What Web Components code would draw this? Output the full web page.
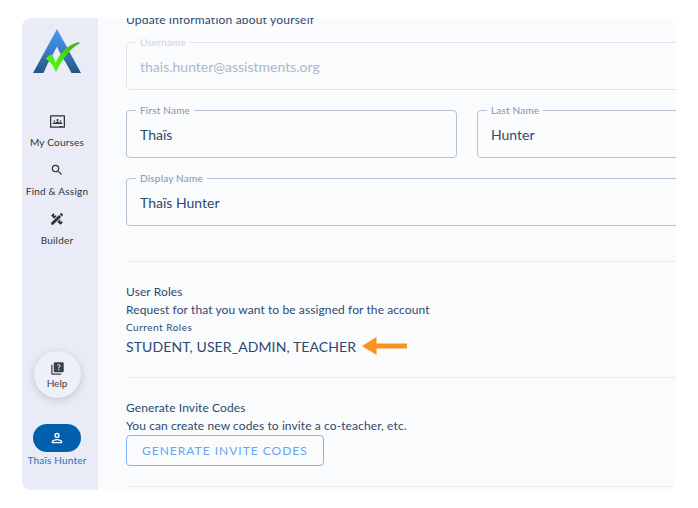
<!DOCTYPE html>
<html lang="en">
<head>
<meta charset="utf-8">
<title>Account</title>
<style>
html{background:#fff}
body{margin:0;padding:18px 22px;box-sizing:border-box;height:100vh;font-family:Lato,"Open Sans",sans-serif;color:#2c4a6e}
</style>
</head>
<body>
<account-page></account-page>
<script>
const define = (name, html, setup) => customElements.define(name, class extends HTMLElement {
  connectedCallback() {
    if (this.shadowRoot) return;
    const t = document.createElement('template');
    t.innerHTML = html;
    this.attachShadow({ mode: 'open' }).append(t.content.cloneNode(true));
    if (setup) setup(this, this.shadowRoot);
  }
});

define('brand-logo', `
<style>:host{display:block;width:48px;height:46px}svg{display:block}</style>
<svg width="48" height="46" viewBox="0 0 48 46" role="img" aria-label="ASSISTments">
<defs>
<linearGradient id="b" x1="0" y1="0" x2="0" y2="1"><stop offset="0" stop-color="#4a9af0"/><stop offset=".45" stop-color="#3b80cb"/><stop offset="1" stop-color="#25547f"/></linearGradient>
<linearGradient id="g" x1="0" y1="1" x2="1" y2="0"><stop offset="0" stop-color="#55fb12"/><stop offset=".5" stop-color="#4be30f"/><stop offset="1" stop-color="#3aa51c"/></linearGradient>
</defs>
<path fill="url(#b)" d="M24 0 48 44H38.500L33 34L29 28L24 17.500L19 27L15 34L10.500 44H0Z"/>
<path fill="url(#g)" d="M12.500 29.500 18.500 25Q21.500 29 22.500 34Q30 17 46 13L46.500 14.500Q34 21 23 43Q18.500 33 12.500 29.500Z"/>
</svg>`);

define('nav-item', `
<style>
:host{display:block}
a{display:flex;flex-direction:column;align-items:center;gap:6px;color:#2f333b;text-decoration:none;font-size:10px;line-height:14px;letter-spacing:.2px;white-space:nowrap}
.icon{display:grid;place-items:center;height:16px}
::slotted(svg){display:block;fill:currentColor}
</style>
<a href="#"><span class="icon"><slot name="icon"></slot></span><slot></slot></a>`);

define('help-button', `
<style>
:host{display:block}
button{display:flex;flex-direction:column;align-items:center;justify-content:center;gap:1px;width:47px;height:47px;padding:0;border:0;border-radius:50%;background:#edf0f8;box-shadow:0 2px 8px #0000002b;color:#3b3f48;font:10px/12px Lato,sans-serif}
svg{display:block;fill:currentColor}
</style>
<button type="button"><svg width="15" height="15" viewBox="0 0 24 24"><path d="M4 6H2v14c0 1.100.9 2 2 2h14v-2H4V6zm16-4H8c-1.100 0-2 .9-2 2v12c0 1.100.9 2 2 2h12c1.100 0 2-.9 2-2V4c0-1.100-.9-2-2-2zm-5.990 13c-.59 0-1.050-.47-1.050-1.050 0-.59.47-1.040 1.050-1.040.59 0 1.040.45 1.040 1.040-.01.58-.45 1.050-1.040 1.050zm2.500-6.170c-.63.93-1.230 1.210-1.560 1.810-.13.24-.18.400-.18 1.180h-1.520c0-.41-.06-1.080.26-1.650.41-.73 1.180-1.160 1.630-1.800.48-.68.21-1.940-1.140-1.940-.88 0-1.320.67-1.500 1.230l-1.370-.57C11.510 5.960 12.520 5 13.990 5c1.230 0 2.080.56 2.510 1.260.37.600.58 1.730.01 2.570z"/></svg>Help</button>`);

define('user-badge', `
<style>
:host{display:block}
a{display:flex;flex-direction:column;align-items:center;color:#2c6fb5;text-decoration:none;font-size:10px;line-height:16px;letter-spacing:.2px;white-space:nowrap}
span{display:grid;place-items:center;width:48px;height:28px;border-radius:14px;background:#0060ae}
svg{fill:#fff}
</style>
<a href="#"><span><svg width="14" height="14" viewBox="0 0 24 24"><path d="M12 3a4.500 4.500 0 1 0 0 9 4.500 4.500 0 0 0 0-9zm0 2.400a2.100 2.100 0 1 1 0 4.200 2.100 2.100 0 0 1 0-4.200zM12 13.500c-3.200 0-9 1.500-9 4.800V21h18v-2.700c0-3.300-5.800-4.800-9-4.800zm0 2.300c2.900 0 6.300 1.300 6.700 2.500v.4H5.300v-.4c.4-1.200 3.800-2.500 6.700-2.500z"/></svg></span><slot></slot></a>`);

define('side-bar', `
<style>
:host{display:block;flex:none;width:76px;background:#e9ecf6}
nav{display:flex;flex-direction:column;align-items:center;box-sizing:border-box;height:100%;margin-right:6px;padding:11px 0 22px}
.links{display:flex;flex-direction:column;align-items:center;gap:13px;margin-top:38px}
help-button{margin:auto 0 26px}
</style>
<nav>
<brand-logo></brand-logo>
<div class="links">
<nav-item><svg slot="icon" width="15" height="15" viewBox="0 0 24 24"><path d="M23 2H1a1 1 0 0 0-1 1v18a1 1 0 0 0 1 1h22a1 1 0 0 0 1-1V3a1 1 0 0 0-1-1zm-1 18h-2v-1h-5v1H2V4h20v16zM10.290 9.710a1.710 1.710 0 1 1 3.420 0 1.710 1.710 0 0 1-3.420 0zm-4.580 1.580a1.290 1.290 0 1 1 2.580 0 1.290 1.290 0 0 1-2.580 0zm10 0a1.290 1.290 0 1 1 2.580 0 1.290 1.290 0 0 1-2.580 0zM20 15.430V16H4v-.57C4 14.200 5.600 13 7 13c.9 0 1.700.3 2.250.75C9.900 12.700 11 12 12 12s2.100.7 2.750 1.750A3.700 3.700 0 0 1 17 13c1.400 0 3 1.200 3 2.430z"/></svg>My Courses</nav-item>
<nav-item><svg slot="icon" width="14" height="14" viewBox="0 0 24 24"><path d="M15.500 14h-.79l-.28-.27A6.470 6.470 0 0 0 16 9.500 6.500 6.500 0 1 0 9.500 16c1.610 0 3.090-.59 4.230-1.570l.27.28v.79l5 4.990L20.490 19l-4.990-5zm-6 0C7.010 14 5 11.990 5 9.500S7.010 5 9.500 5 14 7.010 14 9.500 11.990 14 9.500 14z"/></svg>Find &amp; Assign</nav-item>
<nav-item><svg slot="icon" width="14" height="14" viewBox="0 0 24 24"><path d="M2 6 6 2 8 4 6.500 5.500 8 7 10 5.500 11.500 7 7 11.500ZM2 18.500 15.500 5 19 8.500 5.500 22H2ZM16.500 4 18.500 2H20L22 4V5.500L20 7.500ZM12.500 17 17 12.500 18.500 14 17 15.500 18.500 17 20 15.500 22 18 18 22Z"/></svg>Builder</nav-item>
</div>
<help-button></help-button>
<user-badge>Thaïs Hunter</user-badge>
</nav>`);

define('text-field', `
<style>
:host{display:block;min-width:0}
fieldset{margin:0;padding:0 9px;border:1px solid #b4c1d1;border-radius:4px;min-width:0}
legend{padding:0 4px;font-size:10px;line-height:16px;letter-spacing:.2px;color:#8494ab}
input{display:block;box-sizing:border-box;width:100%;height:39px;margin:0;padding:0 4px 7px;border:0;outline:0;background:none;font:14px/20px Lato,sans-serif;color:#2c4a6e}
:host([disabled]) fieldset{border-color:#e1e5eb}
:host([disabled]) legend{color:#ccd4df}
:host([disabled]) input{color:#abb8c9}
</style>
<fieldset><legend><label for="f"></label></legend><input id="f" type="text"></fieldset>`, (host, root) => {
  root.querySelector('label').textContent = host.getAttribute('label');
  const input = root.querySelector('input');
  input.value = host.getAttribute('value');
  input.disabled = host.hasAttribute('disabled');
});

define('page-section', `
<style>
:host{display:block;border-top:1px solid #e8ecf0;padding-top:21px;font-size:12px;line-height:18px;letter-spacing:.1px}
h2{margin:0;font:inherit}
</style>
<h2><slot name="title"></slot></h2><slot></slot>`);

define('arrow-left', `
<style>:host{display:block}svg{display:block}</style>
<svg width="46" height="20" viewBox="0 0 46 20" aria-hidden="true"><path fill="#f7941e" d="M0 9 14.500 0V6.500H45V11.500H14.500V18Z"/></svg>`);

define('outline-button', `
<style>
:host{display:block}
button{display:block;height:31px;padding:0 15px;border:1px solid #7fb5fb;border-radius:4px;background:none;color:#64a6f9;font:12px/20px Lato,sans-serif;letter-spacing:1px}
</style>
<button type="button"><slot></slot></button>`);

define('account-page', `
<style>
:host{display:flex;height:100%;border-radius:9px;overflow:hidden;background:#fafbfd}
main{flex:1;min-width:0;padding-left:28px}
p{margin:0}
.lead{margin-top:-7px;font-size:12px;line-height:18px;letter-spacing:.2px}
.fields{display:grid;grid-template-columns:1fr 1fr;gap:12px 20px;width:124%;margin:5px 0 35px}
.wide{grid-column:1/-1}
.small{font-size:10px;line-height:16px;letter-spacing:.5px}
.roles{display:flex;align-items:center;gap:6px;font-size:14px;line-height:23px}
page-section+page-section{margin-top:19px}
page-section.last{margin-top:20px;padding:0}
</style>
<side-bar></side-bar>
<main>
<p class="lead">Update information about yourself</p>
<div class="fields">
<text-field class="wide" label="Username" value="thais.hunter@assistments.org" disabled></text-field>
<text-field label="First Name" value="Thaïs"></text-field>
<text-field label="Last Name" value="Hunter"></text-field>
<text-field class="wide" label="Display Name" value="Thaïs Hunter"></text-field>
</div>
<page-section><span slot="title">User Roles</span>
<p>Request for that you want to be assigned for the account</p>
<p class="small">Current Roles</p>
<p class="roles">STUDENT, USER_ADMIN, TEACHER<arrow-left></arrow-left></p>
</page-section>
<page-section><span slot="title">Generate Invite Codes</span>
<p>You can create new codes to invite a co-teacher, etc.</p>
<outline-button>GENERATE INVITE CODES</outline-button>
</page-section>
<page-section class="last"></page-section>
</main>`);
</script>
</body>
</html>
